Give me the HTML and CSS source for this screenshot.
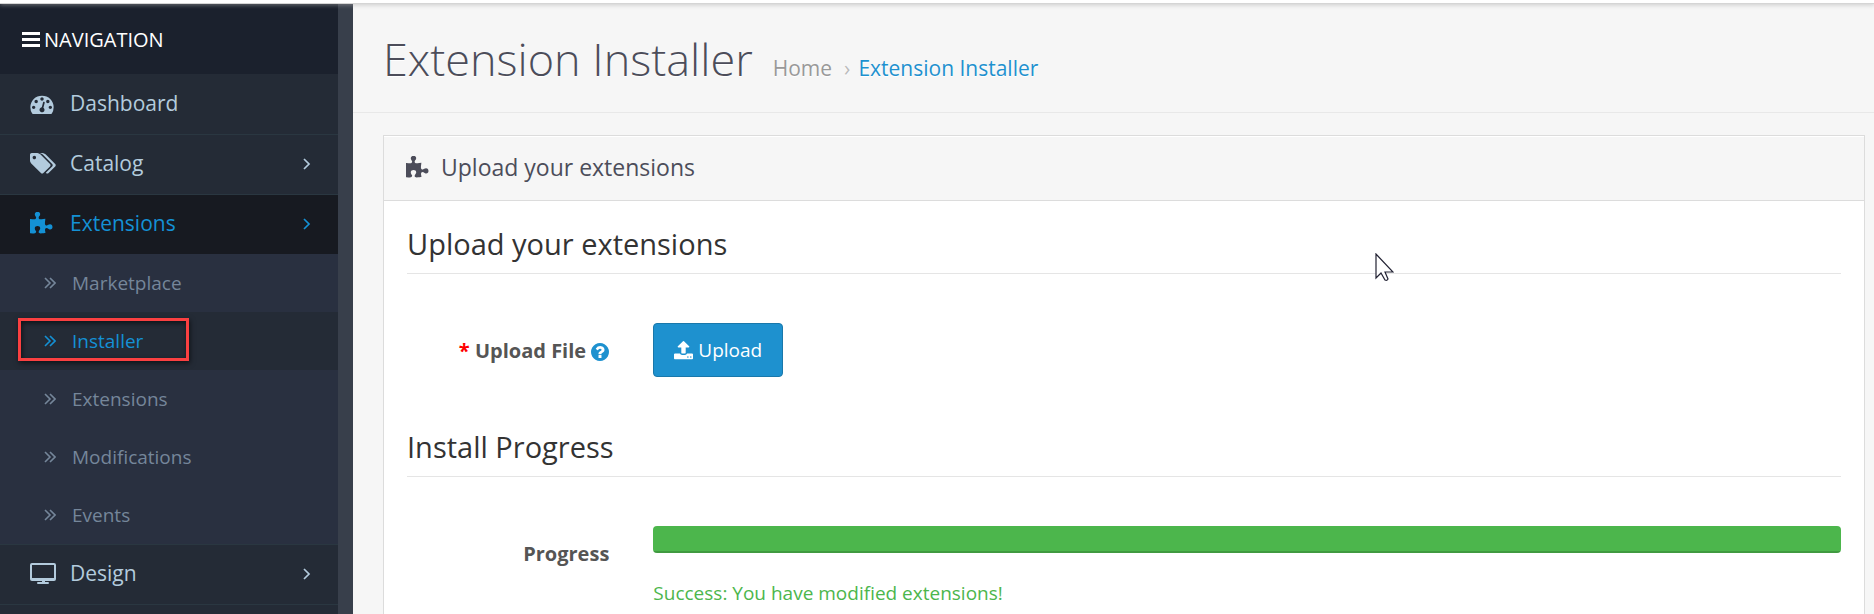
FILE: index.html
```html
<!DOCTYPE html>
<html lang="en">
<head>
    <meta charset="UTF-8">
    <meta name="viewport" content="width=device-width, initial-scale=1.0">
    <title>Extension Installer</title>
    <link rel="stylesheet" href="styles.css">
</head>
<body>

    <!-- shared icons -->
    <svg class="icon-defs" aria-hidden="true">
        <symbol id="puzzle" viewBox="128 0 1664 1664">
            <path d="M1755 1083q0 81-44.5 135t-123.5 54q-41 0-77.5-17.5t-59-38-56.5-38-71-17.5q-110 0-110 124 0 39 16 115t15 115v5q-22 0-33 1-34 3-97.5 11.5t-115.5 13.5-98 5q-61 0-103-26.5t-42-83.5q0-37 17.5-71t38-56.5 38-59 17.5-77.5q0-79-54-123.5t-135-44.5q-84 0-143 45.5t-59 127.5q0 43 15 83t33.5 64.5 33.5 53 15 50.5q0 45-46 89-37 35-117 35-95 0-245-24-9-2-27.5-4t-27.5-4l-13-2q-1 0-3-1-2 0-2-1v-1024q2 1 17.5 3.5t34 5 21.5 3.5q150 24 245 24 80 0 117-35 46-44 46-89 0-22-15-50.5t-33.5-53-33.5-64.5-15-83q0-82 59-127.5t144-45.5q80 0 134 44.5t54 123.5q0 41-17.5 77.5t-38 59-38 56.5-17.5 71q0 57 42 83.5t103 26.5q64 0 180-15t163-17v2q-1 2-3.5 17.5t-5 34-3.5 21.5q-24 150-24 245 0 80 35 117 44 46 89 46 22 0 50.5-15t53-33.5 64.5-33.5 83-15q82 0 127.5 59t45.5 143z"/>
        </symbol>
        <symbol id="angle" viewBox="0 0 8 12">
            <path d="M1 1l5 5-5 5" fill="none" stroke="currentColor" stroke-width="1.7"/>
        </symbol>
        <symbol id="angles" viewBox="0 0 12 12">
            <path d="M1 1l5 5-5 5M6 1l5 5-5 5" fill="none" stroke="currentColor" stroke-width="1.6"/>
        </symbol>
    </svg>

    <header class="topbar"></header>

    <div class="container">
        <nav class="sidebar">
            <div class="nav-title">
                <svg class="icon-bars" viewBox="0 0 18 15"><path d="M0 0h18v3H0zM0 6h18v3H0zM0 12h18v3H0z"/></svg>
                Navigation
            </div>
            <ul class="menu">
                <li>
                    <a href="#">
                        <svg class="icon icon-dash" viewBox="0 128 1792 1536"><path d="M384 1152q0-53-37.5-90.5t-90.5-37.5-90.5 37.5-37.5 90.5 37.5 90.5 90.5 37.5 90.5-37.5 37.5-90.5zm192-448q0-53-37.5-90.5t-90.5-37.5-90.5 37.5-37.5 90.5 37.5 90.5 90.5 37.5 90.5-37.5 37.5-90.5zm428 481l101-382q6-26-7.5-48.5t-38.5-29.5-48 6.5-30 39.5l-101 382q-60 5-107 43.5t-63 98.5q-20 77 20 146t117 89 146-20 89-117q16-60-6-117t-72-91zm660-33q0-53-37.5-90.5t-90.5-37.5-90.5 37.5-37.5 90.5 37.5 90.5 90.5 37.5 90.5-37.5 37.5-90.5zm-640-640q0-53-37.5-90.5t-90.5-37.5-90.5 37.5-37.5 90.5 37.5 90.5 90.5 37.5 90.5-37.5 37.5-90.5zm448 192q0-53-37.5-90.5t-90.5-37.5-90.5 37.5-37.5 90.5 37.5 90.5 90.5 37.5 90.5-37.5 37.5-90.5zm320 448q0 261-141 483-19 29-54 29h-1402q-35 0-54-29-141-221-141-483 0-182 71-348t191-286 286-191 348-71 348 71 286 191 191 286 71 348z"/></svg>
                        <span>Dashboard</span>
                    </a>
                </li>
                <li>
                    <a href="#">
                        <svg class="icon icon-tags" viewBox="128 128 1920 1536"><path d="M576 448q0-53-37.5-90.5t-90.5-37.5-90.5 37.5-37.5 90.5 37.5 90.5 90.5 37.5 90.5-37.5 37.5-90.5zm1067 576q0 53-37 90l-491 492q-39 37-91 37-53 0-90-37l-715-716q-38-37-64.5-101t-26.5-117v-416q0-52 38-90t90-38h416q53 0 117 26.5t102 64.5l715 714q37 39 37 91zm384 0q0 53-37 90l-491 492q-39 37-91 37-36 0-59-14t-53-45l470-470q37-37 37-90 0-52-37-91l-715-714q-38-38-102-64.5t-117-26.5h224q53 0 117 26.5t102 64.5l715 714q37 39 37 91z"/></svg>
                        <span>Catalog</span>
                        <svg class="arrow"><use href="#angle"/></svg>
                    </a>
                </li>
                <li class="active">
                    <a href="#">
                        <svg class="icon icon-puzzle"><use href="#puzzle"/></svg>
                        <span>Extensions</span>
                        <svg class="arrow"><use href="#angle"/></svg>
                    </a>
                    <ul class="submenu">
                        <li><a href="#"><svg class="bullet"><use href="#angles"/></svg>Marketplace</a></li>
                        <li class="current"><a href="#"><svg class="bullet"><use href="#angles"/></svg>Installer</a></li>
                        <li><a href="#"><svg class="bullet"><use href="#angles"/></svg>Extensions</a></li>
                        <li><a href="#"><svg class="bullet"><use href="#angles"/></svg>Modifications</a></li>
                        <li><a href="#"><svg class="bullet"><use href="#angles"/></svg>Events</a></li>
                    </ul>
                </li>
                <li>
                    <a href="#">
                        <svg class="icon icon-desktop" viewBox="0 0 26 21"><path d="M2 0h22a2 2 0 0 1 2 2v14a2 2 0 0 1-2 2h-9v1h3a1 1 0 0 1 0 2H8a1 1 0 0 1 0-2h4v-1H2a2 2 0 0 1-2-2V2a2 2 0 0 1 2-2zM2 2v13h22V2z" fill-rule="evenodd"/></svg>
                        <span>Design</span>
                        <svg class="arrow"><use href="#angle"/></svg>
                    </a>
                </li>
            </ul>
        </nav>

        <main class="content">
            <div class="page-header">
                <h1>Extension Installer</h1>
                <ul class="breadcrumb">
                    <li><a href="#">Home</a></li>
                    <li><a href="#">Extension Installer</a></li>
                </ul>
            </div>

            <section class="panel">
                <h2 class="panel-heading">
                    <svg class="icon-puzzle"><use href="#puzzle"/></svg>
                    Upload your extensions
                </h2>
                <form class="panel-body">
                    <fieldset>
                        <legend>Upload your extensions</legend>
                        <div class="form-group">
                            <label class="required" for="button-upload">Upload File
                                <svg class="help" viewBox="128 128 1536 1536"><path d="M1024 1376v-192q0-14-9-23t-23-9h-192q-14 0-23 9t-9 23v192q0 14 9 23t23 9h192q14 0 23-9t9-23zm256-672q0-88-55.5-163t-138.5-116-170-41q-243 0-371 213-15 24 8 42l132 100q7 6 19 6 16 0 25-12 53-68 86-92 34-24 86-24 48 0 85.5 26t37.5 59q0 38-20 61t-68 45q-63 28-115.5 86.5t-52.5 125.5v36q0 14 9 23t23 9h192q14 0 23-9t9-23q0-19 21.5-49.5t54.5-49.5q32-18 49-28.5t46-35 44.5-48 28-60.5 12.5-81zm384 192q0 209-103 385.5t-279.5 279.5-385.5 103-385.5-103-279.5-279.5-103-385.5 103-385.5 279.5-279.5 385.5-103 385.5 103 279.5 279.5 103 385.5z"/></svg>
                            </label>
                            <div class="field">
                                <button type="button" id="button-upload" class="btn">
                                    <svg class="icon-upload" viewBox="64 128 1664 1536"><path d="M1344 1472q0-26-19-45t-45-19-45 19-19 45 19 45 45 19 45-19 19-45zm256 0q0-26-19-45t-45-19-45 19-19 45 19 45 45 19 45-19 19-45zm128-224v320q0 40-28 68t-68 28h-1472q-40 0-68-28t-28-68v-320q0-40 28-68t68-28h427q21 56 70.5 92t110.5 36h256q61 0 110.5-36t70.5-92h427q40 0 68 28t28 68zm-325-648q-17 40-59 40h-256v448q0 26-19 45t-45 19h-256q-26 0-45-19t-19-45v-448h-256q-42 0-59-40-17-39 14-69l448-448q18-19 45-19t45 19l448 448q31 30 14 69z"/></svg>
                                    Upload
                                </button>
                            </div>
                        </div>
                    </fieldset>
                    <fieldset>
                        <legend>Install Progress</legend>
                        <div class="form-group">
                            <label for="progress">Progress</label>
                            <div class="field">
                                <progress id="progress" value="100" max="100"></progress>
                                <p class="success">Success: You have modified extensions!</p>
                            </div>
                        </div>
                    </fieldset>
                </form>
            </section>
        </main>
    </div>

    <!-- pointer -->
    <svg class="pointer" viewBox="0 0 19 29"><path d="M1 1v24l5-5 4 7q2 1 3-1l-3-7h8z" fill="#fff" stroke="#223" stroke-width="1.2"/></svg>

</body>
</html>
```

FILE: styles.css
```css
*,
*::before,
*::after {
    box-sizing: border-box;
}

body {
    margin: 0;
    height: 100vh;
    display: flex;
    flex-direction: column;
    overflow: hidden;
    font-family: "Open Sans", sans-serif;
    font-size: 19px;
    line-height: 27px;
    color: #666;
    background: #f6f6f6;
}

ul {
    list-style: none;
    margin: 0;
    padding: 0;
}

a {
    color: inherit;
    text-decoration: none;
}

svg {
    fill: currentColor;
    flex: none;
}

.icon-defs {
    position: absolute;
    width: 0;
    height: 0;
}

.topbar {
    flex: none;
    height: 4px;
    background: #fff;
    border-bottom: 1px solid #d5d5d5;
    box-shadow: 0 1px 4px rgba(170, 170, 170, 0.6);
    z-index: 1;
}

.container {
    flex: 1;
    display: flex;
}

/* sidebar */
.sidebar {
    flex: none;
    width: 353px;
    background: #242b36;
    border-right: 15px solid #383f4b;
}

.nav-title {
    display: flex;
    align-items: center;
    gap: 4px;
    height: 70px;
    padding: 0 22px;
    background: #1b212d;
    color: #fff;
    font-size: 20px;
    text-transform: uppercase;
}

.icon-bars {
    width: 18px;
    height: 15px;
}

.menu {
    padding-top: 1px;
}

.menu > li > a {
    display: flex;
    align-items: center;
    height: 59px;
    padding: 0 27px 2px 30px;
    color: #b3cbdd;
    font-size: 21px;
}

.menu > li {
    border-bottom: 1px solid #2a3741;
}

.menu > li > a span {
    flex: 1;
}

.menu > .active > a {
    background: #171a21;
    color: #1491d5;
}

.icon {
    margin-right: 14px;
}

.icon-dash {
    width: 24px;
    height: 20px;
    margin-right: 16px;
}

.icon-tags {
    width: 26px;
    height: 21px;
}

.icon-desktop {
    width: 26px;
    height: 21px;
}

.icon-puzzle {
    width: 23px;
    height: 23px;
}

.icon.icon-puzzle {
    margin-right: 17px;
}

.arrow {
    width: 8px;
    height: 12px;
}

.submenu {
    background: #293040;
}

.submenu a {
    display: flex;
    align-items: center;
    height: 58px;
    padding-left: 44px;
    color: #75869a;
}

.bullet {
    width: 12px;
    height: 12px;
    margin-right: 16px;
}

.submenu .current {
    position: relative;
    background: #242b36;
}

.submenu .current a {
    color: #1491d5;
}

/* marked entry */
.submenu .current::after {
    content: "";
    position: absolute;
    left: 18px;
    top: 6px;
    width: 171px;
    height: 43px;
    border: 3px solid #fb4041;
    box-shadow: 1px 2px 5px rgba(0, 0, 0, 0.6), inset 1px 2px 5px rgba(0, 0, 0, 0.6);
}

/* page */
.content {
    flex: 1;
    display: flex;
    flex-direction: column;
}

.page-header {
    display: flex;
    align-items: baseline;
    gap: 20px;
    padding: 24px 30px 23px;
    border-bottom: 1px solid #e8e8e8;
    margin-bottom: 22px;
}

h1 {
    margin: 0;
    color: #4c4d5a;
    font-size: 45px;
    font-weight: 300;
    line-height: 61px;
    text-shadow: 0 1px #fff;
}

.breadcrumb {
    display: flex;
    font-size: 21px;
    color: #999;
    text-shadow: 0 1px #fff;
}

.breadcrumb li + li {
    color: #1e91cf;
}

.breadcrumb li + li::before {
    content: "›";
    padding: 0 8px 0 12px;
    color: #bbb;
}

.panel {
    flex: 1;
    margin: 0 9px 0 30px;
    background: #fff;
    border: 1px solid #dcdcdc;
    border-bottom: 0;
}

.panel-heading {
    display: flex;
    align-items: center;
    gap: 12px;
    height: 65px;
    margin: 0;
    padding: 0 22px 2px;
    background: #f6f6f6;
    border-top: 1px solid #fff;
    border-bottom: 1px solid #dcdcdc;
    color: #4c4d5a;
    font-size: 23px;
    font-weight: 400;
}

.panel-body {
    padding: 22px 23px;
}

fieldset {
    margin: 0 0 27px;
    padding: 0;
    border: 0;
}

legend {
    width: 100%;
    padding: 0 0 9px;
    margin-bottom: 27px;
    border-bottom: 1px solid #e5e5e5;
    color: #333;
    font-size: 29px;
    line-height: 41px;
}

.form-group {
    display: flex;
    margin: 0 -22px;
    padding: 22px 0;
}

.form-group label {
    width: 16.6667%;
    padding: 14px 22px 0;
    text-align: right;
    font-size: 20px;
    font-weight: 700;
    color: #555;
}

.required::before {
    content: "* ";
    color: #f00;
}

.help {
    width: 18px;
    height: 18px;
    color: #1e91cf;
    vertical-align: -3px;
}

.field {
    flex: 1;
    padding: 0 22px;
}

.btn {
    display: flex;
    align-items: center;
    gap: 5px;
    height: 54px;
    padding: 0 20px;
    background: #1e91cf;
    border: 1px solid #1978ab;
    border-radius: 4px;
    color: #fff;
    font: inherit;
}

.icon-upload {
    width: 19px;
    height: 19px;
}

progress {
    display: block;
    width: 100%;
    height: 27px;
    appearance: none;
    border: 0;
    border-radius: 4px;
    overflow: hidden;
}

progress::-webkit-progress-bar {
    background: #f5f5f5;
}

progress::-webkit-progress-value {
    background: #4cb64c;
    box-shadow: inset 0 -2px rgba(0, 0, 0, 0.15);
}

.success {
    margin: 27px 0 0;
    color: #4cb64c;
}

.pointer {
    position: absolute;
    left: 1375px;
    top: 253px;
    width: 19px;
    height: 29px;
}
```
